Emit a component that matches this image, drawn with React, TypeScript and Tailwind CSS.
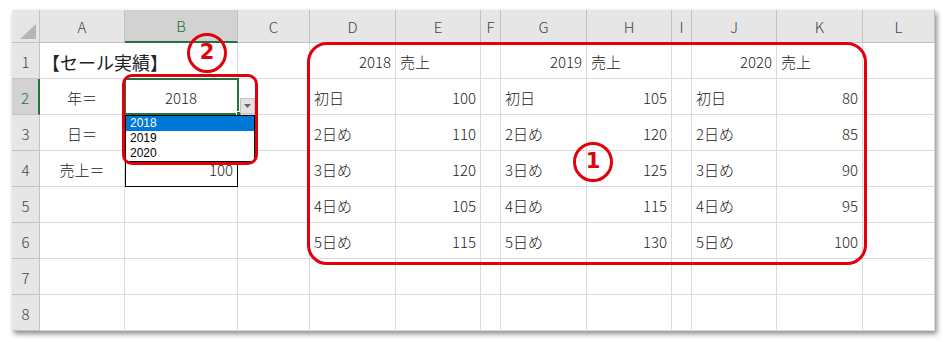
import clsx from "clsx";

type Align = "left" | "center" | "right";

interface CellData {
  text?: string;
  align?: Align;
  span?: number;
  title?: boolean;
  boxed?: boolean;
}

const COLUMNS = ["A", "B", "C", "D", "E", "F", "G", "H", "I", "J", "K", "L"];
const ROWS = [1, 2, 3, 4, 5, 6, 7, 8];

const DAYS = ["初日", "2日め", "3日め", "4日め", "5日め"];

const SALES = [
  { year: "2018", values: ["100", "110", "120", "105", "115"] },
  { year: "2019", values: ["105", "120", "125", "115", "130"] },
  { year: "2020", values: ["80", "85", "90", "95", "100"] },
];

const LABELS: Record<number, string> = { 2: "年＝", 3: "日＝", 4: "売上＝" };

const alignClass: Record<Align, string> = {
  left: "justify-start",
  center: "justify-center",
  right: "justify-end",
};

const buildRow = (row: number): CellData[] => {
  const cells: CellData[] = [];
  if (row === 1) {
    cells.push({ text: "【セール実績】", align: "left", span: 2, title: true });
  } else {
    cells.push({ text: LABELS[row], align: "center" });
    cells.push({
      text: row === 2 ? "2018" : row === 4 ? "100" : undefined,
      align: row === 2 ? "center" : "right",
      boxed: row === 4,
    });
  }
  cells.push({}); // C
  SALES.forEach((s, i) => {
    if (row === 1) {
      cells.push({ text: s.year, align: "right" }, { text: "売上", align: "left" });
    } else if (row <= 6) {
      cells.push(
        { text: DAYS[row - 2], align: "left" },
        { text: s.values[row - 2], align: "right" }
      );
    } else {
      cells.push({}, {});
    }
    if (i < 2) cells.push({}); // F, I spacer columns
  });
  cells.push({}); // L
  return cells;
};

const Corner = () => (
  <div className="bg-[#e6e6e6] border-r border-b border-[#c2c2c2]">
    <svg width="28" height="33" viewBox="0 0 28 33">
      <polygon points="8,29 24,29 24,14" fill="#b5b5b5" />
    </svg>
  </div>
);

const Cell = ({ text, align = "left", span, title, boxed }: CellData) => (
  <div
    className={clsx(
      "flex items-center px-[4px] pt-[3px] border-r border-b border-[#dadada] whitespace-nowrap text-[#222]",
      alignClass[align],
      span === 2 && "col-span-2",
      title ? "text-[18px] pl-[2px] font-normal" : "text-[15px] font-light",
      boxed && "outline-1 outline-black -outline-offset-1"
    )}
  >
    {text}
  </div>
);

// Circled marker number
const Marker = ({ n, className }: { n: string; className: string }) => (
  <div
    className={clsx(
      "absolute w-[40px] h-[40px] rounded-full border-[3px] border-[#e1000c] flex items-center justify-center text-[#e1000c] text-[21px] font-bold font-['DejaVu_Sans',sans-serif]",
      className
    )}
  >
    {n}
  </div>
);

export default function App() {
  return (
    <div className="w-[949px] h-[342px] bg-white pl-[12px] pt-[10px] font-['Noto_Sans_CJK_JP','Noto_Sans',sans-serif]">
      <div className="relative w-[923px] h-[321px] shadow-[2px_3px_5px_rgba(0,0,0,0.45)]">
        <div className="grid grid-cols-[28px_85px_113px_72px_86px_85px_20px_86px_85px_20px_85px_86px_72px] grid-rows-[33px_repeat(8,36px)]">
          <Corner />
          {COLUMNS.map((c) => (
            <div
              key={c}
              className={clsx(
                "flex items-end justify-center pb-[4px] text-[15px] font-light border-r",
                c === "B"
                  ? "bg-[#d2d2d2] text-[#217346] border-b-2 border-b-[#217346] border-r-[#c2c2c2]"
                  : "bg-[#e6e6e6] text-[#444] border-b border-[#c2c2c2]"
              )}
            >
              {c}
            </div>
          ))}
          {ROWS.map((r) => (
            <div key={r} className="contents">
              <div
                className={clsx(
                  "flex items-end justify-center pb-[5px] text-[15px] font-light border-b",
                  r === 2
                    ? "bg-[#d2d2d2] text-[#217346] border-r-2 border-r-[#217346] border-b-[#c2c2c2]"
                    : "bg-[#e6e6e6] text-[#444] border-r border-[#c2c2c2]"
                )}
              >
                {r}
              </div>
              {buildRow(r).map((cell, i) => (
                <Cell key={i} {...cell} />
              ))}
            </div>
          ))}
        </div>

        {/* active cell B2 */}
        <div className="absolute left-[112px] top-[68px] w-[115px] h-[37px] border-2 border-[#217346]" />
        <div className="absolute left-[224px] top-[101px] w-[6px] h-[6px] bg-[#217346] border border-white" />

        {/* list dropdown button */}
        <div className="absolute left-[228px] top-[88px] w-[15px] h-[16px] bg-[#e3e3e3] border border-[#c4c4c4] flex items-center justify-center">
          <svg width="7" height="4" viewBox="0 0 7 4">
            <polygon points="0,0 7,0 3.5,4" fill="#666" />
          </svg>
        </div>

        {/* dropdown list */}
        <div className="absolute left-[113px] top-[105px] w-[130px] bg-white border border-black text-[12px] leading-[15px] text-black font-['Liberation_Sans',sans-serif]">
          <div className="bg-[#0078d7] text-white pl-[4px]">2018</div>
          <div className="pl-[4px]">2019</div>
          <div className="pl-[4px]">2020</div>
        </div>

        {/* annotations */}
        <div className="absolute left-[110px] top-[64px] w-[136px] h-[91px] rounded-[10px] border-[3px] border-[#e1000c]" />
        <div className="absolute left-[295px] top-[32px] w-[560px] h-[223px] rounded-[20px] border-[3px] border-[#e1000c]" />
        <Marker n="1" className="left-[561px] top-[132px]" />
        <Marker n="2" className="left-[175px] top-[23px]" />
      </div>
    </div>
  );
}
